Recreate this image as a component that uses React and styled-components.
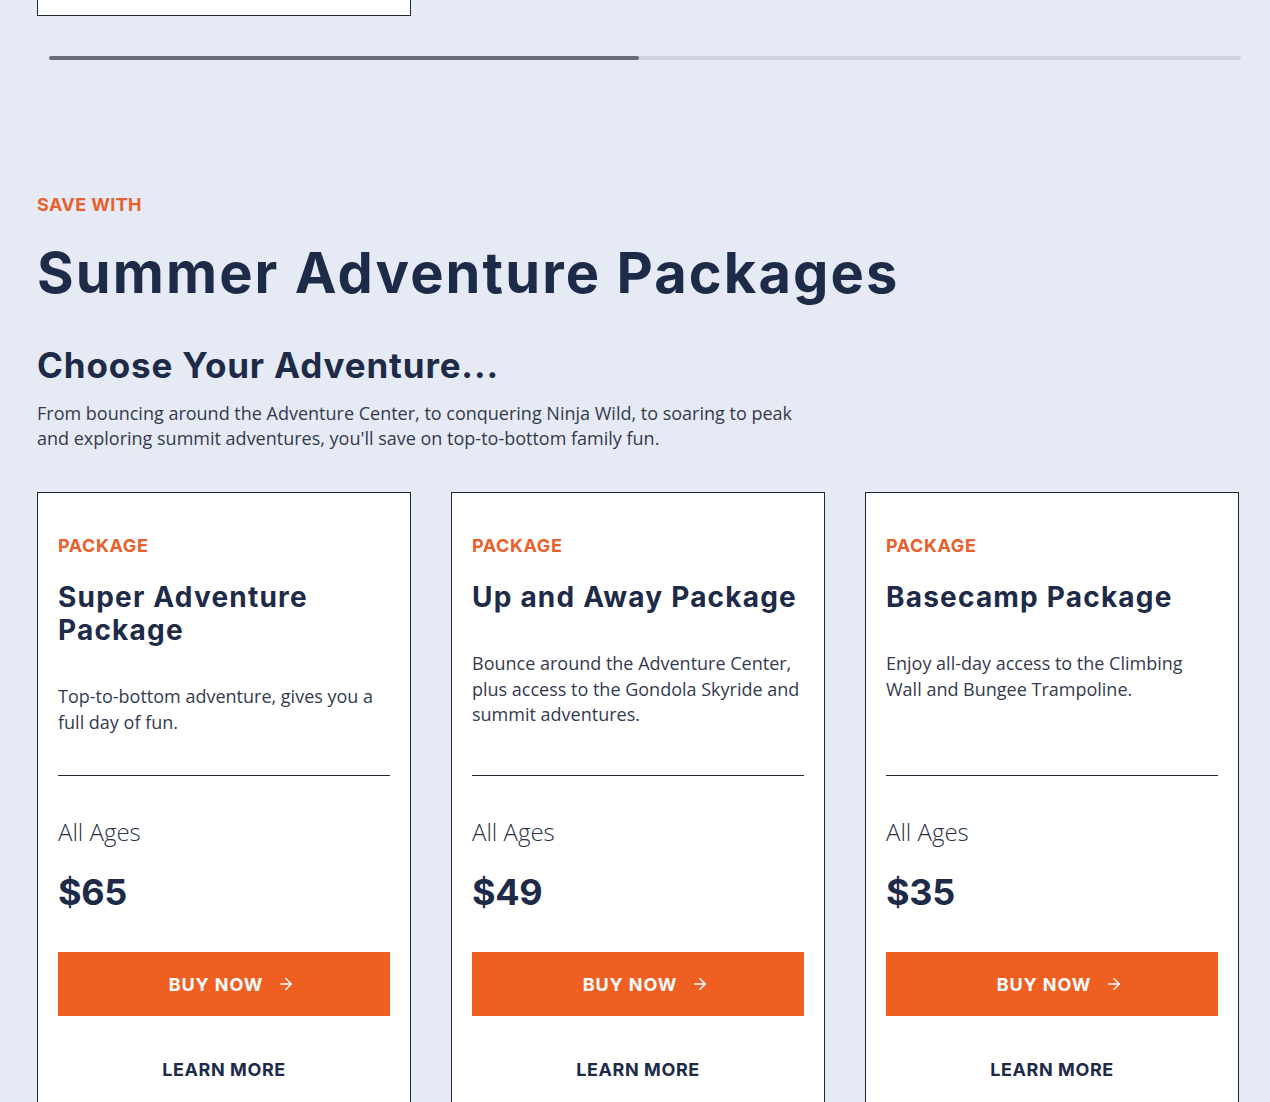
import React from "react";
import styled, { createGlobalStyle } from "styled-components";
import { ArrowRight } from "lucide-react";

const Global = createGlobalStyle`
  html, body { margin: 0; padding: 0; background: #e6eaf4; }
  body { font-family: "Open Sans", "Liberation Sans", sans-serif; color: #1d2a48; }
  * { box-sizing: border-box; }
`;

const Page = styled.div`
  padding: 0 31px 0 37px;
  min-height: 1102px;
  overflow: hidden;
`;

const PrevCard = styled.div`
  width: 374px;
  height: 16px;
  background: #fff;
  border: 1px solid #1f2638;
  border-top: none;
`;

const Track = styled.div`
  margin: 40px -2px 0 12px;
  height: 4px;
  border-radius: 2px;
  background: #d1d4de;
  display: flex;
`;

const Thumb = styled.div`
  height: 100%;
  border-radius: 2px;
  background: #676a78;
`;

const Section = styled.section`
  padding-top: 136px;
`;

const Eyebrow = styled.div`
  font-family: "Inter", "Liberation Sans", sans-serif;
  font-weight: 700;
  font-size: 18px;
  line-height: 18px;
  color: #e8612c;
  text-transform: uppercase;
  letter-spacing: 0.4px;
`;

const Title = styled.h1`
  margin: 27px 0 0;
  font-family: "Inter", "Liberation Sans", sans-serif;
  font-weight: 700;
  font-size: 56px;
  line-height: 64px;
  letter-spacing: 2.1px;
  color: #1d2a48;
`;

const Subtitle = styled.h2`
  margin: 40px 0 0;
  font-family: "Inter", "Liberation Sans", sans-serif;
  font-weight: 700;
  font-size: 35px;
  line-height: 40px;
  letter-spacing: 0.85px;
  color: #1d2a48;
`;

const Intro = styled.p`
  margin: 16px 0 0;
  max-width: 780px;
  font-size: 18px;
  line-height: 25px;
  color: #333a4f;
`;

const Grid = styled.div`
  margin-top: 41px;
  display: grid;
  grid-template-columns: repeat(3, 1fr);
  column-gap: 40px;
`;

const Card = styled.div`
  background: #fff;
  border: 1px solid #1f2638;
  padding: 44px 20px 30px;
  display: flex;
  flex-direction: column;
`;

const Top = styled.div`
  flex: 1;
  min-height: 238px;
`;

const Label = styled(Eyebrow)`
  letter-spacing: 0.6px;
`;

const CardTitle = styled.h3`
  margin: 26px 0 0;
  font-family: "Inter", "Liberation Sans", sans-serif;
  font-weight: 700;
  font-size: 28px;
  line-height: 33px;
  color: #1d2a48;
  letter-spacing: 1.2px;
`;

const Desc = styled.p`
  margin: 37px 0 0;
  font-size: 18px;
  line-height: 25.5px;
  color: #333a4f;
`;

const Divider = styled.hr`
  margin: 0;
  border: none;
  border-top: 1px solid #1f2638;
`;

const Ages = styled.div`
  margin-top: 40px;
  font-size: 24px;
  line-height: 32px;
  font-weight: 300;
  color: #2a3147;
`;

const Price = styled.div`
  margin-top: 24px;
  font-family: "Inter", "Liberation Sans", sans-serif;
  font-weight: 700;
  font-size: 36px;
  line-height: 40px;
  letter-spacing: -0.3px;
  color: #1d2a48;
`;

const BuyButton = styled.button`
  margin-top: 40px;
  height: 64px;
  width: 100%;
  border: none;
  padding: 0 0 0 16px;
  background: #ef5f22;
  color: #fff;
  display: flex;
  align-items: center;
  justify-content: center;
  gap: 14px;
  font-family: "Inter", "Liberation Sans", sans-serif;
  font-weight: 700;
  font-size: 18px;
  letter-spacing: 0.9px;
  text-transform: uppercase;
  cursor: pointer;
`;

const LearnMore = styled.button`
  margin-top: 40px;
  background: none;
  border: none;
  color: #1d2a48;
  font-family: "Inter", "Liberation Sans", sans-serif;
  font-weight: 700;
  font-size: 18px;
  line-height: 26px;
  letter-spacing: 0.6px;
  text-transform: uppercase;
  cursor: pointer;
`;

const packages = [
  {
    title: "Super Adventure Package",
    desc: "Top-to-bottom adventure, gives you a full day of fun.",
    price: "$65",
  },
  {
    title: "Up and Away Package",
    desc: "Bounce around the Adventure Center, plus access to the Gondola Skyride and summit adventures.",
    price: "$49",
  },
  {
    title: "Basecamp Package",
    desc: "Enjoy all-day access to the Climbing Wall and Bungee Trampoline.",
    price: "$35",
  },
];

export default function App() {
  return (
    <>
      <Global />
      <Page>
        <PrevCard />
        <Track>
          <Thumb style={{ width: "49.5%" }} />
        </Track>
        <Section>
          <Eyebrow>Save With</Eyebrow>
          <Title>Summer Adventure Packages</Title>
          <Subtitle>Choose Your Adventure...</Subtitle>
          <Intro>
            From bouncing around the Adventure Center, to conquering Ninja Wild, to soaring to peak
            and exploring summit adventures, you'll save on top-to-bottom family fun.
          </Intro>
          <Grid>
            {packages.map((p) => (
              <Card key={p.title}>
                <Top>
                  <Label>Package</Label>
                  <CardTitle>{p.title}</CardTitle>
                  <Desc>{p.desc}</Desc>
                </Top>
                <Divider />
                <Ages>All Ages</Ages>
                <Price>{p.price}</Price>
                <BuyButton>
                  Buy Now <ArrowRight size={18} strokeWidth={2} />
                </BuyButton>
                <LearnMore>Learn More</LearnMore>
              </Card>
            ))}
          </Grid>
        </Section>
      </Page>
    </>
  );
}
